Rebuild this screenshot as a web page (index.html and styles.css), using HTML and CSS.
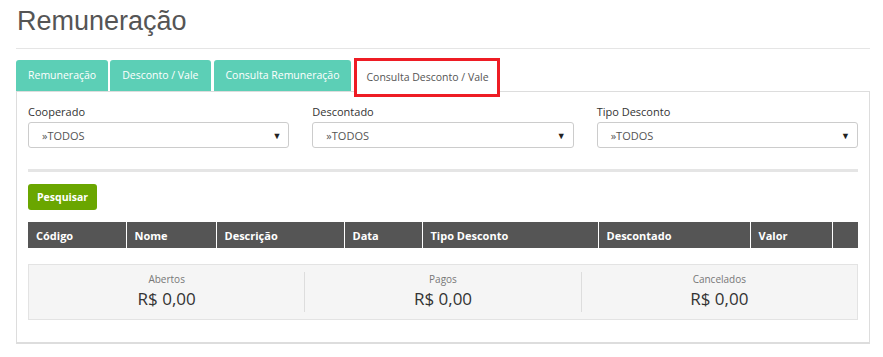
FILE: index.html
```html
<!DOCTYPE html>
<html lang="pt">
<head>
    <meta charset="UTF-8">
    <title>Remuneração</title>
    <link rel="stylesheet" href="styles.css">
</head>
<body>

<h1 class="titulo">Remuneração</h1>

<!-- Abas -->
<ul class="abas">
    <li class="aba">Remuneração</li>
    <li class="aba">Desconto / Vale</li>
    <li class="aba">Consulta Remuneração</li>
    <li class="aba ativa">Consulta Desconto / Vale</li>
</ul>

<div class="painel">

    <!-- Filtros -->
    <div class="filtros">
        <div class="campo">
            <label>Cooperado</label>
            <div class="select"><span>»TODOS</span><span class="seta">▼</span></div>
        </div>
        <div class="campo">
            <label>Descontado</label>
            <div class="select"><span>»TODOS</span><span class="seta">▼</span></div>
        </div>
        <div class="campo">
            <label>Tipo Desconto</label>
            <div class="select"><span>»TODOS</span><span class="seta">▼</span></div>
        </div>
    </div>

    <div class="separador"></div>

    <button class="btn-pesquisar">Pesquisar</button>

    <!-- Tabela de resultados -->
    <table class="tabela-descontos">
        <colgroup>
            <col class="c-codigo">
            <col class="c-nome">
            <col class="c-descricao">
            <col class="c-data">
            <col class="c-tipo">
            <col class="c-descontado">
            <col class="c-valor">
            <col>
        </colgroup>
        <tr>
            <th>Código</th>
            <th>Nome</th>
            <th>Descrição</th>
            <th>Data</th>
            <th>Tipo Desconto</th>
            <th>Descontado</th>
            <th>Valor</th>
            <th></th>
        </tr>
    </table>

    <!-- Totais -->
    <div class="totais">
        <div class="total">
            <span class="total-rotulo">Abertos</span>
            <span class="total-valor">R$ 0,00</span>
        </div>
        <div class="total">
            <span class="total-rotulo">Pagos</span>
            <span class="total-valor">R$ 0,00</span>
        </div>
        <div class="total">
            <span class="total-rotulo">Cancelados</span>
            <span class="total-valor">R$ 0,00</span>
        </div>
    </div>

</div>

</body>
</html>
```

FILE: styles.css
```css
body {
    margin: 0;
    padding: 0 13px 0 16px;
    font-family: "Open Sans", sans-serif;
    color: #333;
    background: #fff;
}

/* Titulo da pagina */
.titulo {
    font-family: "Liberation Sans", Arial, sans-serif;
    font-weight: normal;
    font-size: 27px;
    color: #555;
    margin: 0;
    padding: 6px 0 12px 1px;
    line-height: 30px;
    border-bottom: 1px solid #e5e5e5;
}

/* Abas */
.abas {
    list-style: none;
    margin: 11px 0 0 0;
    padding: 0;
    display: flex;
    gap: 2px;
    height: 31px;
}

.aba {
    background-color: #5ccfb6;
    color: #fff;
    font-size: 10.5px;
    padding: 0 12px;
    line-height: 31px;
    border-radius: 3px 3px 0 0;
}

.aba:nth-child(3) {
    margin-left: 1px;
}

.aba.ativa {
    background: #fff;
    color: #555;
    line-height: 32px;
    margin: -2px 0 -5px 1px;
    border: 3px solid #ee1c24;
    padding: 0 8px 0 9px;
    border-radius: 0;
    height: 33px;
}

/* Painel */
.painel {
    border: 1px solid #ddd;
    border-bottom: 2px solid #ddd;
    padding: 11px 11px 22px 11px;
}

.filtros {
    display: flex;
    gap: 23px;
}

.campo {
    flex: 1;
}

.campo label {
    display: block;
    font-size: 11px;
    line-height: 17px;
    margin-bottom: 2px;
}

.select {
    height: 24px;
    border: 1px solid #ccc;
    border-radius: 3px;
    display: flex;
    justify-content: space-between;
    align-items: center;
    padding: 0 7px 0 13px;
    font-size: 11px;
    color: #555;
}

.seta {
    font-size: 9px;
    color: #222;
}

.separador {
    height: 3px;
    background: #e5e5e5;
    margin: 21px 0 12px 0;
}

.btn-pesquisar {
    display: block;
    background: #6aa600;
    color: #fff;
    border: none;
    border-radius: 3px;
    font-family: "Open Sans", sans-serif;
    font-weight: bold;
    font-size: 10.5px;
    height: 26px;
    padding: 0 9px;
    margin-bottom: 12px;
}

/* Tabela */
.tabela-descontos {
    width: 100%;
    border-collapse: collapse;
    table-layout: fixed;
}

.tabela-descontos th {
    background: #555;
    color: #fff;
    font-size: 11px;
    font-weight: bold;
    text-align: left;
    height: 26px;
    padding: 0 8px;
    border-left: 1px solid #fff;
}

.tabela-descontos th:first-child {
    border-left: none;
}

.c-codigo { width: 98px; }
.c-nome { width: 90px; }
.c-descricao { width: 128px; }
.c-data { width: 78px; }
.c-tipo { width: 176px; }
.c-descontado { width: 152px; }
.c-valor { width: 82px; }

/* Totais */
.totais {
    display: flex;
    margin-top: 16px;
    background: #f5f5f5;
    border: 1px solid #e3e3e3;
    padding: 7px 0;
}

.total {
    flex: 1;
    display: flex;
    flex-direction: column;
    align-items: center;
    border-left: 1px solid #ddd;
}

.total:first-child {
    border-left: none;
}

.total-rotulo {
    font-size: 10px;
    color: #777;
    line-height: 14px;
}

.total-valor {
    font-size: 17px;
    line-height: 26px;
    color: #333;
}
```
